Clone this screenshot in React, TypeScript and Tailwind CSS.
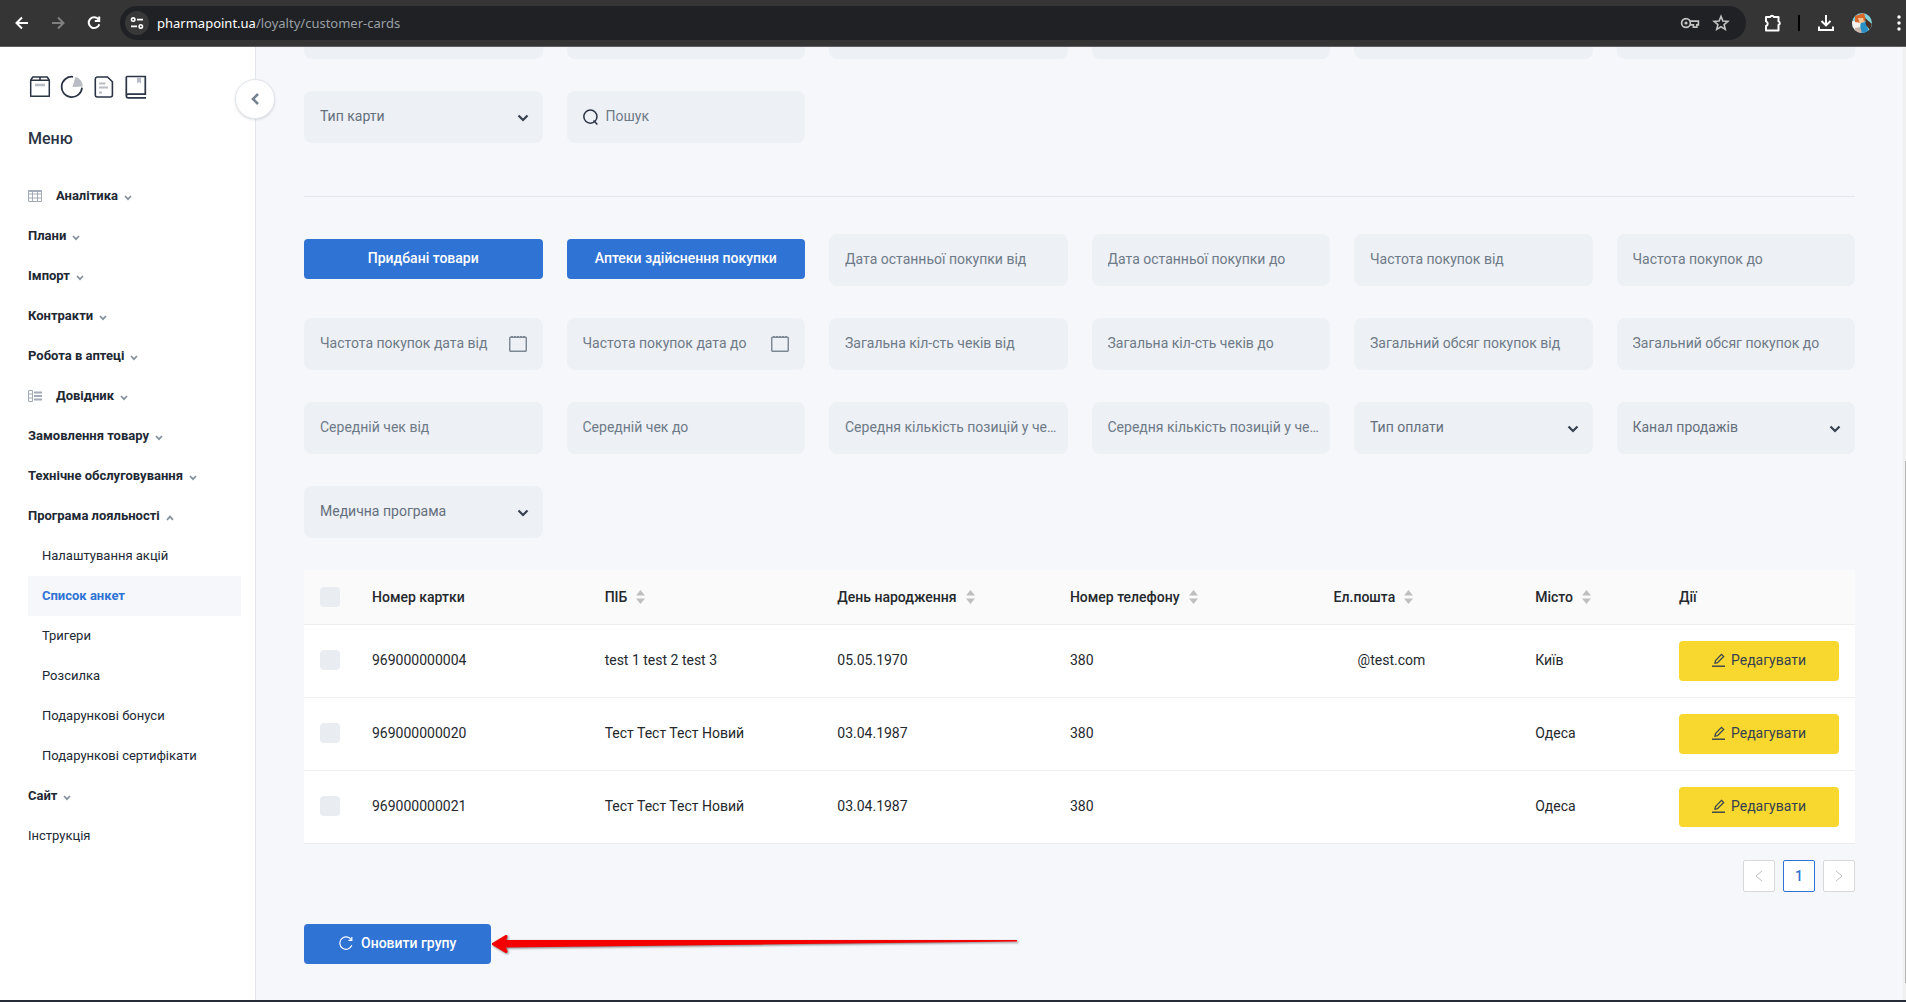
import React, { useState } from "react";

type FieldKind = "text" | "select" | "date" | "search";

interface Field {
  name: string;
  label: string;
  kind: FieldKind;
}

const topFields: Field[] = [
  { name: "cardType", label: "Тип карти", kind: "select" },
  { name: "search", label: "Пошук", kind: "search" },
];

const filterFields: Field[] = [
  { name: "lastPurchaseFrom", label: "Дата останньої покупки від", kind: "text" },
  { name: "lastPurchaseTo", label: "Дата останньої покупки до", kind: "text" },
  { name: "frequencyFrom", label: "Частота покупок від", kind: "text" },
  { name: "frequencyTo", label: "Частота покупок до", kind: "text" },
  { name: "frequencyDateFrom", label: "Частота покупок дата від", kind: "date" },
  { name: "frequencyDateTo", label: "Частота покупок дата до", kind: "date" },
  { name: "checksFrom", label: "Загальна кіл-сть чеків від", kind: "text" },
  { name: "checksTo", label: "Загальна кіл-сть чеків до", kind: "text" },
  { name: "volumeFrom", label: "Загальний обсяг покупок від", kind: "text" },
  { name: "volumeTo", label: "Загальний обсяг покупок до", kind: "text" },
  { name: "avgCheckFrom", label: "Середній чек від", kind: "text" },
  { name: "avgCheckTo", label: "Середній чек до", kind: "text" },
  { name: "avgItemsFrom", label: "Середня кількість позицій у чеку від", kind: "text" },
  { name: "avgItemsTo", label: "Середня кількість позицій у чеку до", kind: "text" },
  { name: "paymentType", label: "Тип оплати", kind: "select" },
  { name: "salesChannel", label: "Канал продажів", kind: "select" },
  { name: "medicalProgram", label: "Медична програма", kind: "select" },
];

const customers = [
  { card: "969000000004", name: "test 1 test 2 test 3", birthday: "05.05.1970", phone: "380", email: "@test.com", city: "Київ" },
  { card: "969000000020", name: "Тест Тест Тест Новий", birthday: "03.04.1987", phone: "380", email: "", city: "Одеса" },
  { card: "969000000021", name: "Тест Тест Тест Новий", birthday: "03.04.1987", phone: "380", email: "", city: "Одеса" },
];

const menu = [
  { label: "Аналітика", icon: "grid" },
  { label: "Плани" },
  { label: "Імпорт" },
  { label: "Контракти" },
  { label: "Робота в аптеці" },
  { label: "Довідник", icon: "list" },
  { label: "Замовлення товару" },
  { label: "Технічне обслуговування" },
  {
    label: "Програма лояльності",
    children: ["Налаштування акцій", "Список анкет", "Тригери", "Розсилка", "Подарункові бонуси", "Подарункові сертифікати"],
  },
  { label: "Сайт" },
];

function BrowserBar() {
  return (
    <header className="flex h-[47px] shrink-0 items-center border-b border-[#5f5f5f] bg-[#353535] pr-1 pl-3 text-white">
      <button type="button" aria-label="Back" className="flex h-5 w-5 items-center justify-center">
        <svg width="14" height="14" viewBox="0 0 14 14" fill="none" stroke="currentColor" strokeWidth="2">
          <path d="M13 7H2M7 1.5L1.5 7L7 12.5" />
        </svg>
      </button>
      <button type="button" aria-label="Forward" className="ml-4 flex h-5 w-5 items-center justify-center text-[#7f7f7f]">
        <svg width="14" height="14" viewBox="0 0 14 14" fill="none" stroke="currentColor" strokeWidth="2">
          <path d="M1 7H12M7 1.5L12.5 7L7 12.5" />
        </svg>
      </button>
      <button type="button" aria-label="Reload" className="ml-4 flex h-5 w-5 items-center justify-center">
        <svg width="14" height="14" viewBox="0 0 14 14" fill="none" stroke="currentColor" strokeWidth="2">
          <path d="M11.6 3.6A5.4 5.4 0 1 0 12.3 8.2" />
          <path d="M12.2 0.6V5H7.8" />
        </svg>
      </button>
      <div className="ml-4 flex h-[34px] flex-1 items-center rounded-full bg-[#202124] pr-4 pl-[5px]">
        <button type="button" aria-label="Site information" className="flex h-6 w-6 items-center justify-center rounded-full bg-[#383838]">
          <svg width="14" height="14" viewBox="0 0 14 14" fill="none" stroke="currentColor" strokeWidth="1.6">
            <circle cx="3.2" cy="3.6" r="1.7" />
            <path d="M7 3.6H13M1 10.4H7" />
            <circle cx="10.8" cy="10.4" r="1.7" />
          </svg>
        </button>
        <div className="ml-2 flex-1 font-['Noto_Sans','Open_Sans',sans-serif] text-[13px] text-[#9aa0a6]">
          <span className="text-white">pharmapoint.ua</span>/loyalty/customer-cards
        </div>
        <svg width="20" height="14" viewBox="0 0 20 14" fill="none" stroke="#c4c4c4" strokeWidth="1.7">
          <circle cx="6" cy="7" r="4.4" />
          <circle cx="6" cy="7" r="1.6" fill="#c4c4c4" stroke="none" />
          <path d="M10 5.2H18.4V8.8H16.8V11.2H13.4V8.8H10" />
        </svg>
        <svg className="ml-3" width="18" height="18" viewBox="0 0 18 18" fill="none" stroke="#c4c4c4" strokeWidth="1.6">
          <path d="M9 2.4L10.9 7L15.9 7.4L12.1 10.6L13.3 15.4L9 12.8L4.7 15.4L5.9 10.6L2.1 7.4L7.1 7Z" />
        </svg>
      </div>
      <svg className="ml-4" width="20" height="20" viewBox="0 0 20 20" fill="none" stroke="currentColor" strokeWidth="2" strokeLinejoin="round">
        <path d="M4 4H8.2A1.9 1.9 0 0 1 11.8 4H16.5V8.4A1.9 1.9 0 0 1 16.5 12V17.4H4V13A2.4 2.4 0 0 0 4 8.4Z" />
      </svg>
      <span className="ml-4 h-4 w-0.5 bg-black" />
      <svg className="ml-4" width="20" height="20" viewBox="0 0 20 20" fill="none" stroke="currentColor" strokeWidth="2">
        <path d="M10 2V12M5.5 8L10 12.4L14.5 8M3 13.5V17H17V13.5" />
      </svg>
      <svg className="ml-4" width="20" height="20" viewBox="0 0 20 20">
        <clipPath id="avatar">
          <circle cx="10" cy="10" r="10" />
        </clipPath>
        <g clipPath="url(#avatar)">
          <rect width="20" height="20" fill="#7fd0dc" />
          <path d="M0 8H8V20H0Z" fill="#f4f1ee" />
          <path d="M3 3L12 0L14 7L10 10L3 9Z" fill="#d9692a" />
          <path d="M6 5H11L12 9L8 11Z" fill="#f2c79b" />
          <path d="M9 10L14 9L17 20H8Z" fill="#2a8fc4" />
          <path d="M13 5L20 11L18 17L14 12Z" fill="#4a2f22" />
          <path d="M3 15L8 14L10 20H3Z" fill="#c9b5a8" />
        </g>
      </svg>
      <svg className="ml-6" width="6" height="16" viewBox="0 0 6 16" fill="currentColor">
        <circle cx="3" cy="2" r="1.7" />
        <circle cx="3" cy="8" r="1.7" />
        <circle cx="3" cy="14" r="1.7" />
      </svg>
    </header>
  );
}

function ShortcutIcons() {
  return (
    <div className="flex items-center gap-2 text-[#2b3445]">
      <a href="#orders" aria-label="Замовлення">
        <svg width="24" height="24" viewBox="0 0 24 24" fill="none" stroke="currentColor" strokeWidth="1.5">
          <path d="M2.700 5.200V21.300H21.300V5.200L19.200 2H4.800L2.700 5.200H21.300M12 2V5.200" strokeLinejoin="round" />
          <path d="M7 10H17" stroke="#b9bcc4" strokeWidth="2.600" />
        </svg>
      </a>
      <a href="#stats" aria-label="Статистика">
        <svg width="24" height="24" viewBox="0 0 24 24" fill="none" stroke="currentColor" strokeWidth="1.7">
          <path d="M13 1.800A10.200 10.200 0 1 0 22 12.600" />
          <path d="M12.500 12L15.500 1.800A10.200 10.200 0 0 1 22.800 11.600Z" fill="#b9bcc4" stroke="none" />
        </svg>
      </a>
      <a href="#docs" aria-label="Документи">
        <svg width="24" height="24" viewBox="0 0 24 24" fill="none" stroke="currentColor" strokeWidth="1.6">
          <path d="M5 2H15.500L20.400 6.800V20A2 2 0 0 1 18.400 22H5A2 2 0 0 1 3.300 20V4A2 2 0 0 1 5 2Z" />
          <path d="M7 8.500H13.500M7 12.500H16M7 17.500H10" stroke="#b9bcc4" strokeWidth="2" />
        </svg>
      </a>
      <a href="#guide" aria-label="Довідка">
        <svg width="24" height="24" viewBox="0 0 24 24" fill="none" stroke="currentColor" strokeWidth="1.7">
          <path d="M22 22.800H4A1.800 1.800 0 0 1 2.300 21V2.500A1 1 0 0 1 3.300 1.500H21.300V19.200H4A1.800 1.800 0 0 0 2.300 21" />
          <path d="M13 2.500V8.500L15 7L17 8.500V2.500Z" fill="#b9bcc4" stroke="none" />
        </svg>
      </a>
    </div>
  );
}

function MenuIcon({ name }: { name: string }) {
  if (name === "grid") {
    return (
      <svg width="14" height="12" viewBox="0 0 14 12" fill="none" stroke="#a4abb8">
        <path d="M0.5 0.5H13.5V11.5H0.5ZM0.5 4H13.5M0.5 8H13.5M4.5 0.5V11.5M9.5 0.5V11.5" />
        <path d="M1 1.5H13" />
      </svg>
    );
  }
  return (
    <svg width="14" height="12" viewBox="0 0 14 12" fill="none" stroke="#a4abb8">
      <path d="M0.5 0.5H4.5V11.5H0.5ZM0.5 4H4.5M0.5 8H4.5" />
      <path d="M6 2.5H14M6 6H14M6 9.5H14" strokeWidth="2" />
    </svg>
  );
}

function MenuChevron({ up }: { up?: boolean }) {
  return (
    <svg width="8" height="6" viewBox="0 0 8 6" fill="none" stroke="#84909d" strokeWidth="1.7" className="mt-[3px]">
      <path d={up ? "M1 4.800L4 1.600L7 4.800" : "M1 1L4 4.200L7 1"} />
    </svg>
  );
}

function Sidebar({ onToggle }: { onToggle: () => void }) {
  return (
    <aside className="relative w-64 shrink-0 border-r border-[#e2e6ec] bg-white pt-7 pr-[14px] pl-7">
      <ShortcutIcons />
      <button
        type="button"
        onClick={onToggle}
        aria-label="Згорнути меню"
        className="absolute top-8 -right-5 z-10 flex h-10 w-10 items-center justify-center rounded-full border border-[#e2e6ec] bg-white shadow-sm"
      >
        <svg width="8" height="12" viewBox="0 0 8 12" fill="none" stroke="#75828f" strokeWidth="2.6">
          <path d="M7 1L2 6L7 11" />
        </svg>
      </button>
      <h2 className="mt-7 text-base leading-6 font-medium text-[#2b3445]">Меню</h2>
      <nav className="mt-[25px] text-[13px] text-[#212833]">
        {menu.map((item) => (
          <div key={item.label}>
            <button type="button" className="flex h-10 w-full items-center font-bold">
              {item.icon && (
                <span className="mr-[14px]">
                  <MenuIcon name={item.icon} />
                </span>
              )}
              <span className="mr-1.5">{item.label}</span>
              <MenuChevron up={!!item.children} />
            </button>
            {item.children?.map((child) => (
              <a
                key={child}
                href="#"
                className={
                  child === "Список анкет"
                    ? "flex h-10 items-center bg-[#f5f7fb] pl-[14px] font-bold text-[#2f73d4]"
                    : "flex h-10 items-center pl-[14px]"
                }
              >
                {child}
              </a>
            ))}
          </div>
        ))}
        <a href="#" className="flex h-10 items-center">
          Інструкція
        </a>
      </nav>
    </aside>
  );
}

function FilterField({ field }: { field: Field }) {
  if (field.kind === "select") {
    return (
      <div className="relative">
        <select
          aria-label={field.label}
          name={field.name}
          className="h-13 w-full appearance-none rounded-lg bg-[#edf0f5] px-4 pb-0.5 text-[#646f7c]"
        >
          <option>{field.label}</option>
        </select>
        <svg className="pointer-events-none absolute top-[23px] right-[14px]" width="12" height="8" viewBox="0 0 12 8" fill="none" stroke="#36404e" strokeWidth="2.2">
          <path d="M1.5 1.5L6 6L10.5 1.5" />
        </svg>
      </div>
    );
  }
  return (
    <label className="flex h-13 items-center rounded-lg bg-[#edf0f5] pr-2 pl-4">
      {field.kind === "search" && (
        <svg className="mr-2 shrink-0" width="15" height="18" viewBox="0 0 15 18" fill="none" stroke="#2b3445" strokeWidth="1.5">
          <circle cx="7.4" cy="8.600" r="6.600" />
          <path d="M10.500 12.500L14.400 16.500" />
        </svg>
      )}
      <input
        type="text"
        name={field.name}
        aria-label={field.label}
        placeholder={field.label}
        className="w-full min-w-0 flex-1 pb-0.5 text-ellipsis outline-none placeholder:text-[#6e7a87]"
      />
      {field.kind === "date" && (
        <svg className="mr-2 shrink-0" width="18" height="16" viewBox="0 0 18 16" fill="none" stroke="#7d8894" strokeWidth="1.5">
          <rect x="0.700" y="1.300" width="16.600" height="14" rx="1" />
          <path d="M2 1H16" strokeWidth="2" strokeDasharray="2 1" />
        </svg>
      )}
    </label>
  );
}

function SortIcon() {
  return (
    <svg width="9" height="14" viewBox="0 0 9 14" fill="#bfbfbf">
      <path d="M4.500 0L9 5.500H0Z" />
      <path d="M4.500 14L9 8.500H0Z" />
    </svg>
  );
}

function HeaderCell({ label, sortable }: { label: string; sortable?: boolean }) {
  return (
    <th className="px-4 text-left font-medium">
      {sortable ? (
        <button type="button" className="flex items-center gap-[9px]">
          {label}
          <SortIcon />
        </button>
      ) : (
        label
      )}
    </th>
  );
}

function Checkbox({ label }: { label: string }) {
  return (
    <input
      type="checkbox"
      aria-label={label}
      className="block h-5 w-5 appearance-none rounded bg-[#e9edf2] checked:bg-[#2f73d4]"
    />
  );
}

function CustomersTable() {
  return (
    <table className="mt-8 w-full table-fixed bg-white text-[#24282d]">
      <colgroup>
        <col className="w-[52px]" />
        <col className="w-[15%]" />
        <col className="w-[15%]" />
        <col className="w-[15%]" />
        <col className="w-[17%]" />
        <col className="w-[13%]" />
        <col />
        <col className="w-48" />
      </colgroup>
      <thead className="bg-[#fafafa]">
        <tr className="h-[54px] border-b border-[#eeeeee]">
          <th className="pl-4">
            <Checkbox label="Вибрати всі" />
          </th>
          <HeaderCell label="Номер картки" />
          <HeaderCell label="ПІБ" sortable />
          <HeaderCell label="День народження" sortable />
          <HeaderCell label="Номер телефону" sortable />
          <HeaderCell label="Ел.пошта" sortable />
          <HeaderCell label="Місто" sortable />
          <HeaderCell label="Дії" />
        </tr>
      </thead>
      <tbody>
        {customers.map((customer) => (
          <tr key={customer.card} className="h-[73px] border-b border-[#eeeeee]">
            <td className="pb-0.5 pl-4">
              <Checkbox label={customer.card} />
            </td>
            <td className="px-4 pb-0.5">{customer.card}</td>
            <td className="px-4 pb-0.5">{customer.name}</td>
            <td className="px-4 pb-0.5">{customer.birthday}</td>
            <td className="px-4 pb-0.5">{customer.phone}</td>
            <td className="pr-4 pb-0.5 pl-10">{customer.email}</td>
            <td className="px-4 pb-0.5">{customer.city}</td>
            <td className="px-4">
              <button type="button" className="flex h-10 w-full items-center justify-center gap-1.5 rounded bg-[#f8d82f] pb-0.5 text-[#36404e]">
                <svg width="13" height="14" viewBox="0 0 13 14" fill="none" stroke="currentColor" strokeWidth="1.200">
                  <path d="M2.900 10.300L3.500 7.500L9.500 1.300L11.700 3.500L5.500 9.700Z" />
                  <path d="M0 13.200H13" strokeWidth="1.400" />
                </svg>
                Редагувати
              </button>
            </td>
          </tr>
        ))}
      </tbody>
    </table>
  );
}

function Pagination() {
  return (
    <div className="mt-4 flex justify-end gap-2">
      <button type="button" disabled aria-label="Попередня" className="flex h-8 w-8 items-center justify-center rounded-xs border border-[#d9d9d9] bg-white">
        <svg width="8" height="12" viewBox="0 0 8 12" fill="none" stroke="#bfbfbf">
          <path d="M7 1L1 6L7 11" />
        </svg>
      </button>
      <button type="button" className="h-8 w-8 rounded-xs border border-[#2f73d4] bg-white font-medium text-[#2f73d4]">
        1
      </button>
      <button type="button" disabled aria-label="Наступна" className="flex h-8 w-8 items-center justify-center rounded-xs border border-[#d9d9d9] bg-white">
        <svg width="8" height="12" viewBox="0 0 8 12" fill="none" stroke="#bfbfbf">
          <path d="M1 1L7 6L1 11" />
        </svg>
      </button>
    </div>
  );
}

export default function App() {
  const [collapsed, setCollapsed] = useState(false);

  return (
    <div className="flex h-screen flex-col overflow-hidden border-b-2 border-[#262c38] bg-[#f5f7fb] font-[Roboto,sans-serif] text-sm">
      <BrowserBar />
      <div className="flex min-h-0 flex-1">
        {!collapsed && <Sidebar onToggle={() => setCollapsed(true)} />}
        <main className="min-w-0 flex-1 px-12">
          {/* Tail of the first filter row, scrolled under the browser bar */}
          <div className="grid grid-cols-6 gap-6">
            {[1, 2, 3, 4, 5, 6].map((n) => (
              <div key={n} className="h-3 rounded-b-lg bg-[#edf0f5]" />
            ))}
          </div>
          <div className="mt-8 grid grid-cols-6 gap-6">
            {topFields.map((field) => (
              <FilterField key={field.name} field={field} />
            ))}
          </div>

          <hr className="mt-[53px] border-[#e2e6ec]" />

          <div className="mt-[37px] grid grid-cols-6 gap-x-6 gap-y-8">
            {["Придбані товари", "Аптеки здійснення покупки"].map((label) => (
              <div key={label} className="pt-[5px]">
                <button type="button" className="h-10 w-full rounded bg-[#2f73d4] pb-0.5 font-medium text-white">
                  {label}
                </button>
              </div>
            ))}
            {filterFields.map((field) => (
              <FilterField key={field.name} field={field} />
            ))}
          </div>

          <CustomersTable />
          <Pagination />

          <div className="mt-8 flex items-center">
            <button type="button" className="flex h-10 items-center gap-2 rounded bg-[#2f73d4] px-[35px] pb-0.5 font-medium text-white">
              <svg width="14" height="14" viewBox="0 0 14 14" fill="none" stroke="currentColor" strokeWidth="1.2">
                <path d="M12.300 3.800A6.200 6.200 0 1 0 12.800 9.300" />
                <path d="M12.800 1V4.300H9.500" />
              </svg>
              Оновити групу
            </button>
            <svg className="drop-shadow-[1px_1px_1px_rgba(0,0,0,0.5)]" width="526" height="22" viewBox="0 0 526 22">
              <path d="M4 10.500L12 7L526 7V8.500L12 14.500Z" fill="#f40000" />
              <path d="M15 3.500L2.500 11L15 18.500L12 11Z" fill="#f40000" stroke="#f40000" strokeWidth="3" strokeLinejoin="round" />
            </svg>
          </div>
        </main>
        <div className="flex w-[3px] shrink-0 flex-col bg-[#f1f1f1] pt-[414px] pb-[17px]">
          <div className="ml-0.5 flex-1 bg-[#b5b5b5]" />
        </div>
      </div>
    </div>
  );
}
